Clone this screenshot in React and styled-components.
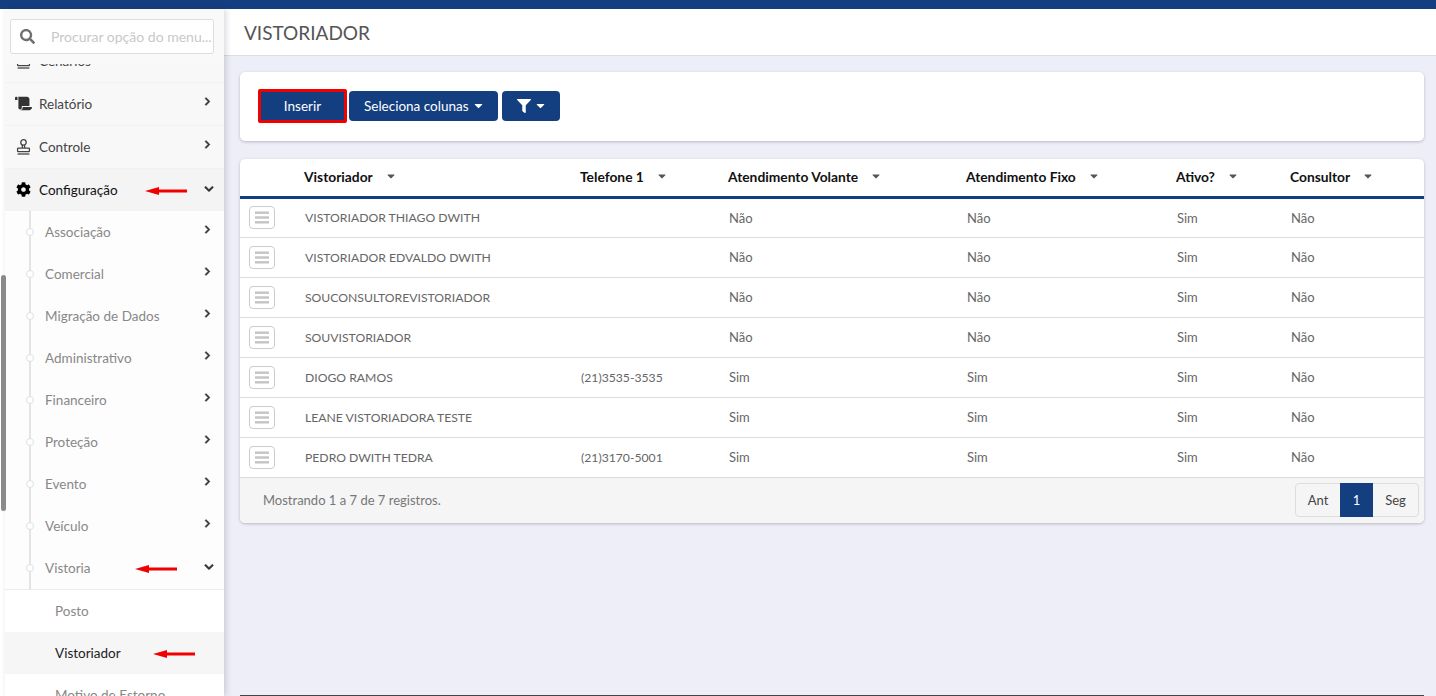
import React from "react";
import styled, { createGlobalStyle } from "styled-components";
import {
  FaCaretDown,
  FaChevronDown,
  FaChevronRight,
  FaCog,
  FaFilter,
  FaScroll,
  FaSearch,
} from "react-icons/fa";

const BLUE = "#133e7f";

const subMenu = [
  "Associação",
  "Comercial",
  "Migração de Dados",
  "Administrativo",
  "Financeiro",
  "Proteção",
  "Evento",
  "Veículo",
];

const columns = [
  { label: "Vistoriador", width: 276 },
  { label: "Telefone 1", width: 148 },
  { label: "Atendimento Volante", width: 238 },
  { label: "Atendimento Fixo", width: 210 },
  { label: "Ativo?", width: 114 },
  { label: "Consultor", width: 142 },
];

const rows = [
  ["VISTORIADOR THIAGO DWITH", "", "Não", "Não", "Sim", "Não"],
  ["VISTORIADOR EDVALDO DWITH", "", "Não", "Não", "Sim", "Não"],
  ["SOUCONSULTOREVISTORIADOR", "", "Não", "Não", "Sim", "Não"],
  ["SOUVISTORIADOR", "", "Não", "Não", "Sim", "Não"],
  ["DIOGO RAMOS", "(21)3535-3535", "Sim", "Sim", "Sim", "Não"],
  ["LEANE VISTORIADORA TESTE", "", "Sim", "Sim", "Sim", "Não"],
  ["PEDRO DWITH TEDRA", "(21)3170-5001", "Sim", "Sim", "Sim", "Não"],
];

function RedArrow({ gap }) {
  return (
    <ArrowSvg $gap={gap} width="42" height="10" viewBox="0 0 42 10">
      <path d="M0 5 L14 1 L14 3.6 L42 3.6 L42 6.4 L14 6.4 L14 9 Z" fill="#f00000" />
    </ArrowSvg>
  );
}

function StampIcon() {
  return (
    <svg width="17" height="16" viewBox="0 0 17 16" fill="none" stroke="#444" strokeWidth="1.3">
      <circle cx="8.5" cy="3.4" r="2.7" />
      <path d="M7.4 6 L7.4 9 M9.6 6 L9.6 9" />
      <rect x="2.6" y="9.2" width="11.8" height="3.4" rx="0.6" />
      <path d="M2.6 15 L14.4 15" />
    </svg>
  );
}

function RowMenuIcon() {
  return (
    <svg width="14" height="13" viewBox="0 0 14 13" fill="#c4c4c4">
      <rect x="0" y="0.5" width="14" height="2.4" />
      <rect x="0" y="5.3" width="14" height="2.4" />
      <rect x="0" y="10.1" width="14" height="2.4" />
    </svg>
  );
}

function App() {
  return (
    <Page>
      <GlobalStyle />
      <TopBar />
      <Body>
        <Gutter>
          <GutterThumb />
        </Gutter>
        <Sidebar>
          <SearchArea>
            <SearchBox>
              <FaSearch size={15} color="#6f6f6f" />
              <SearchInput placeholder="Procurar opção do menu..." />
            </SearchBox>
          </SearchArea>
          <MenuList>
            <MenuItem>
              <StampIcon />
              <MenuLabel>Cenários</MenuLabel>
            </MenuItem>
            <MenuItem>
              <FaScroll size={17} color="#333" />
              <MenuLabel>Relatório</MenuLabel>
              <Chevron />
            </MenuItem>
            <MenuItem>
              <StampIcon />
              <MenuLabel>Controle</MenuLabel>
              <Chevron />
            </MenuItem>
            <MenuItem $open>
              <FaCog size={15} color="#000" />
              <MenuLabel $dark>
                Configuração
                <RedArrow gap={27} />
              </MenuLabel>
              <ChevronOpen />
            </MenuItem>
            <SubTree>
              {subMenu.map((name) => (
                <SubItem key={name}>
                  <Dot />
                  <SubLabel>{name}</SubLabel>
                  <Chevron />
                </SubItem>
              ))}
              <SubItem $last>
                <Dot />
                <SubLabel>
                  Vistoria
                  <RedArrow gap={44} />
                </SubLabel>
                <ChevronOpen />
              </SubItem>
            </SubTree>
            <LeafItem>Posto</LeafItem>
            <LeafItem $active>
              Vistoriador
              <RedArrow gap={32} />
            </LeafItem>
            <LeafItem>Motivo de Estorno</LeafItem>
          </MenuList>
        </Sidebar>
        <Main>
          <PageHeader>
            <PageTitle>VISTORIADOR</PageTitle>
          </PageHeader>
          <Content>
            <ActionCard>
              <BlueButton $marked>Inserir</BlueButton>
              <BlueButton $width={149}>
                Seleciona colunas
                <SmallCaret />
              </BlueButton>
              <BlueButton $width={58} $icon>
                <FaFilter size={14} />
                <SmallCaret />
              </BlueButton>
            </ActionCard>
            <TableCard>
              <Table>
                <thead>
                  <tr>
                    <HeadCell $width={56} />
                    {columns.map((c) => (
                      <HeadCell key={c.label} $width={c.width}>
                        <HeadInner>
                          {c.label}
                          <FaCaretDown size={12} color="#555" />
                        </HeadInner>
                      </HeadCell>
                    ))}
                  </tr>
                </thead>
                <tbody>
                  {rows.map((row) => (
                    <tr key={row[0]}>
                      <Cell>
                        <RowMenu>
                          <RowMenuIcon />
                        </RowMenu>
                      </Cell>
                      {row.map((value, i) => (
                        <Cell key={i} $small={i < 2}>
                          {value}
                        </Cell>
                      ))}
                    </tr>
                  ))}
                </tbody>
              </Table>
              <TableFooter>
                <FooterInfo>Mostrando 1 a 7 de 7 registros.</FooterInfo>
                <Pager>
                  <PageLink $width={44}>Ant</PageLink>
                  <PageLink $width={33} $active>
                    1
                  </PageLink>
                  <PageLink $width={45}>Seg</PageLink>
                </Pager>
              </TableFooter>
            </TableCard>
          </Content>
          <BottomLine />
        </Main>
      </Body>
    </Page>
  );
}

export default App;

const GlobalStyle = createGlobalStyle`
  html, body {
    margin: 0;
    padding: 0;
    height: 100%;
    overflow: hidden;
  }
  body {
    font-family: Lato, "Noto Sans", sans-serif;
    font-size: 13.5px;
    color: #666;
  }
`;

const Page = styled.div`
  width: 1436px;
  height: 696px;
  display: flex;
  flex-direction: column;
  overflow: hidden;
  background: #eeeef8;
`;

const TopBar = styled.div`
  height: 9px;
  background: ${BLUE};
  flex: none;
`;

const Body = styled.div`
  flex: 1;
  display: flex;
  min-height: 0;
`;

const Gutter = styled.div`
  width: 5px;
  flex: none;
  background: #fff;
  position: relative;
`;

const GutterThumb = styled.div`
  position: absolute;
  left: 1px;
  top: 266px;
  width: 5px;
  height: 236px;
  background: #8a8a8a;
  border-radius: 3px;
  z-index: 3;
`;

const Sidebar = styled.aside`
  width: 219px;
  flex: none;
  display: flex;
  flex-direction: column;
  background: #fff;
  box-shadow: 2px 0 6px rgba(60, 60, 90, 0.2);
  z-index: 2;
  overflow: hidden;
`;

const SearchArea = styled.div`
  height: 55px;
  flex: none;
  padding: 10px 10px 0 5px;
  box-sizing: border-box;
  background: #f9f9f9;
  position: relative;
  z-index: 1;
`;

const SearchBox = styled.div`
  height: 35px;
  box-sizing: border-box;
  border: 1px solid #ddd;
  border-radius: 3px;
  display: flex;
  align-items: center;
  gap: 16px;
  padding-left: 9px;
  background: #fff;
`;

const SearchInput = styled.input`
  border: 0;
  outline: 0;
  min-width: 0;
  flex: 1;
  font: inherit;
  font-size: 14px;
  padding: 0;
  &::placeholder {
    color: #c8c8c8;
    opacity: 1;
  }
`;

const MenuList = styled.div`
  margin-top: -24px;
  display: flex;
  flex-direction: column;
`;

const MenuItem = styled.div`
  height: ${(p) => (p.$open ? "42px" : "43px")};
  flex: none;
  display: flex;
  align-items: center;
  padding: ${(p) => (p.$open ? "0 10px" : "0 10px 1px")};
  box-sizing: border-box;
  background: ${(p) => (p.$open ? "#f4f4f4" : "#f8f8f8")};
  border-bottom: 1px solid #f2f2f2;
  box-shadow: ${(p) => (p.$open ? "0 2px 3px rgba(0,0,0,0.12)" : "none")};
  position: relative;
  > svg:first-child {
    flex: none;
    width: 17px;
  }
`;

const MenuLabel = styled.span`
  flex: 1;
  margin-left: 7px;
  color: ${(p) => (p.$dark ? "#111" : "#444")};
  display: flex;
  align-items: center;
`;

const ArrowSvg = styled.svg`
  margin-left: ${(p) => p.$gap}px;
  margin-top: 2px;
  flex: none;
`;

const Chevron = styled(FaChevronRight).attrs({ size: 9 })`
  color: #333;
  flex: none;
  margin: -4px 2px 0 0;
  stroke: currentColor;
  stroke-width: 30;
`;

const ChevronOpen = styled(FaChevronDown).attrs({ size: 10 })`
  color: #333;
  flex: none;
  margin: -2px 0 0 0;
  stroke: currentColor;
  stroke-width: 30;
`;

const SubTree = styled.div`
  position: relative;
  background: #fdfdfd;
  &::before {
    content: "";
    position: absolute;
    left: 24px;
    top: 0;
    bottom: 0;
    width: 2px;
    background: #e4e4e4;
  }
`;

const SubItem = styled.div`
  height: ${(p) => (p.$last ? "43px" : "42px")};
  display: flex;
  align-items: center;
  padding: 0 10px 1px 40px;
  box-sizing: border-box;
  position: relative;
  border-bottom: ${(p) => (p.$last ? "1px solid #ececec" : "0")};
`;

const Dot = styled.span`
  position: absolute;
  left: 21px;
  top: 17px;
  width: 8px;
  height: 8px;
  box-sizing: border-box;
  border: 1px solid #e0e0e0;
  border-radius: 50%;
  background: #fff;
  z-index: 1;
`;

const SubLabel = styled.span`
  flex: 1;
  color: #888;
  display: flex;
  align-items: center;
`;

const LeafItem = styled.div`
  height: 42px;
  flex: none;
  display: flex;
  align-items: center;
  padding: 0 0 1px 50px;
  box-sizing: border-box;
  color: ${(p) => (p.$active ? "#222" : "#888")};
  background: ${(p) => (p.$active ? "#f6f6f6" : "#fff")};
`;

const Main = styled.main`
  flex: 1;
  min-width: 0;
  display: flex;
  flex-direction: column;
  position: relative;
`;

const PageHeader = styled.header`
  height: 47px;
  flex: none;
  box-sizing: border-box;
  background: #fff;
  border-bottom: 1px solid #dcdce2;
  display: flex;
  align-items: center;
  padding-left: 20px;
`;

const PageTitle = styled.h1`
  margin: 0;
  font-size: 19px;
  font-weight: 400;
  color: #555;
`;

const Content = styled.div`
  flex: 1;
  padding: 16px 12px 0 16px;
  display: flex;
  flex-direction: column;
  gap: 18px;
`;

const ActionCard = styled.section`
  height: 69px;
  flex: none;
  box-sizing: border-box;
  background: #fff;
  border-radius: 5px;
  box-shadow: 0 1px 3px rgba(60, 60, 80, 0.3);
  display: flex;
  align-items: center;
  gap: 2px;
  padding: 0 0 2px 18px;
`;

const BlueButton = styled.button`
  height: ${(p) => (p.$marked ? "34px" : "30px")};
  width: ${(p) => (p.$marked ? "89px" : `${p.$width}px`)};
  box-sizing: border-box;
  border: ${(p) => (p.$marked ? "3px solid #f00000" : "0")};
  border-radius: ${(p) => (p.$marked ? "2px" : "4px")};
  background: ${BLUE};
  color: #fff;
  font: inherit;
  padding: ${(p) => (p.$marked ? "0" : "0 0 0 15px")};
  display: inline-flex;
  align-items: center;
  justify-content: ${(p) => (p.$marked ? "center" : "flex-start")};
  margin-left: ${(p) => (p.$icon ? "2px" : "0")};
`;

const SmallCaret = styled(FaCaretDown).attrs({ size: 13 })`
  margin-left: 3px;
`;

const TableCard = styled.section`
  background: #fff;
  border-radius: 5px;
  box-shadow: 0 1px 3px rgba(60, 60, 80, 0.3);
  overflow: hidden;
`;

const Table = styled.table`
  width: 100%;
  border-collapse: collapse;
  table-layout: fixed;
`;

const HeadCell = styled.th`
  width: ${(p) => p.$width}px;
  height: 38px;
  padding: 0 8px 2px;
  box-sizing: border-box;
  text-align: left;
  font-size: 13.8px;
  font-weight: 700;
  color: #111;
  border-bottom: 3px solid ${BLUE};
`;

const HeadInner = styled.div`
  display: flex;
  align-items: center;
  gap: 12px;
`;

const Cell = styled.td`
  height: 40px;
  padding: 0 9px;
  box-sizing: border-box;
  font-size: ${(p) => (p.$small ? "12.2px" : "13px")};
  color: #666;
  border-bottom: 1px solid #dcdcdc;
`;

const RowMenu = styled.div`
  width: 26px;
  height: 23px;
  box-sizing: border-box;
  border: 1px solid #ccc;
  border-radius: 4px;
  display: flex;
  align-items: center;
  justify-content: center;
  background: #fff;
`;

const TableFooter = styled.div`
  height: 45px;
  background: #f5f5f5;
  display: flex;
  align-items: center;
  justify-content: space-between;
  padding: 0 5px 0 23px;
  font-size: 13px;
`;

const FooterInfo = styled.span`
  color: #777;
`;

const Pager = styled.div`
  display: flex;
  height: 34px;
  box-sizing: border-box;
  border: 1px solid #ddd;
  border-radius: 4px;
`;

const PageLink = styled.span`
  display: flex;
  align-items: center;
  justify-content: center;
  width: ${(p) => p.$width}px;
  box-sizing: border-box;
  margin: ${(p) => (p.$active ? "-1px 0" : "0")};
  background: ${(p) => (p.$active ? BLUE : "transparent")};
  color: ${(p) => (p.$active ? "#fff" : "#444")};
`;

const BottomLine = styled.div`
  position: absolute;
  left: 16px;
  right: 12px;
  bottom: 0;
  height: 1px;
  background: #444;
`;
